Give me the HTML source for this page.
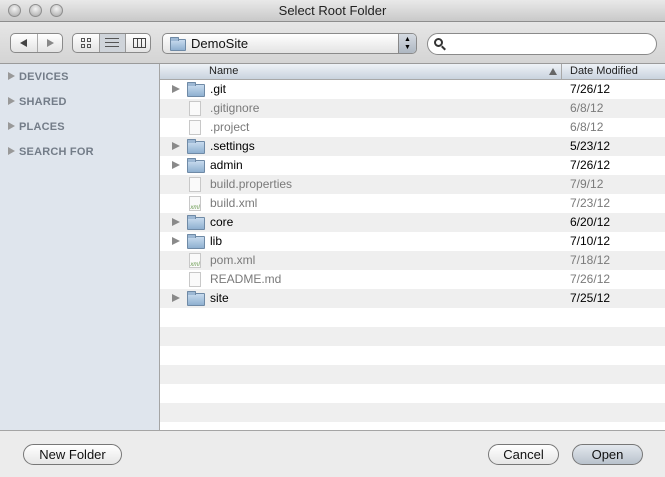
<!DOCTYPE html>
<html><head><style>
*{margin:0;padding:0;box-sizing:border-box}
body{width:665px;height:477px;overflow:hidden;font-family:"Liberation Sans",sans-serif;background:#ececec;position:relative}
.title{position:absolute;left:0;top:0;width:665px;height:22px;background:linear-gradient(#e9e9e9,#c9c9c9);border-bottom:1px solid #8d8d8d;text-align:center;font-size:13px;line-height:22px;color:#222}
.light{position:absolute;top:4px;width:13px;height:13px;border-radius:50%;background:radial-gradient(circle at 50% 35%,#f4f4f4,#bdbdbd 70%,#9a9a9a);border:1px solid #8e8e8e}
.tool{position:absolute;left:0;top:22px;width:665px;height:42px;background:linear-gradient(#e6e6e6,#d4d4d4);border-bottom:1px solid #9a9a9a}
.btn{position:absolute;border:1px solid #8a8a8a;border-radius:5px;background:linear-gradient(#fff,#e3e3e3)}
.side{position:absolute;left:0;top:64px;width:160px;height:366px;background:#dfe5ed;border-right:1px solid #a5a5a5}
.side div{position:absolute;left:8px;font-size:11px;font-weight:bold;color:#737c88;letter-spacing:.2px}
.side div:before{content:"";display:inline-block;border-left:7px solid #999;border-top:4px solid transparent;border-bottom:4px solid transparent;margin-right:4px;vertical-align:0}
.list{position:absolute;left:160px;top:64px;width:505px;height:366px;background:repeating-linear-gradient(#fff 0 19px,#efefef 19px 38px);background-position:0 16px}
.hdr{position:absolute;left:0;top:0;width:505px;height:16px;background:linear-gradient(#eef2f7,#c9d3de);border-bottom:1px solid #a8a8a8;font-size:11px;color:#222}
.row{position:absolute;left:0;width:505px;height:19px;font-size:12px;line-height:19px}
.row .n{position:absolute;left:50px}
.row .d{position:absolute;left:410px}
.g{color:#7a7a7a}
.tri{position:absolute;left:12px;top:5px;border-left:8px solid #8a8a8a;border-top:4.5px solid transparent;border-bottom:4.5px solid transparent}
.fold{position:absolute;left:27px;top:4px;width:18px;height:13px;border:1px solid #6f8aa6;border-radius:1px;background:linear-gradient(#c8dbee,#8fb0d0)}
.fold:before{content:"";position:absolute;left:-1px;top:-3px;width:7px;height:3px;background:#9db8d4;border:1px solid #6f8aa6;border-bottom:none;border-radius:1px 1px 0 0}
.doc{position:absolute;left:29px;top:2px;width:12px;height:15px;border:1px solid #c8c8c8;background:#fafafa;font-size:6px;color:#6a9a50;line-height:22px;text-align:center}
.bot{position:absolute;left:0;top:430px;width:665px;height:47px;background:#ececec;border-top:1px solid #a5a5a5}
.pb{position:absolute;top:13px;height:21px;border:1px solid #777;border-radius:11px;background:linear-gradient(#fff,#e6e6e6);font-size:13px;text-align:center;line-height:19px;color:#111}
.sq{position:absolute;width:4px;height:4px;border:1px solid #555}
</style></head><body>
<div class="title">Select Root Folder</div>
<div class="light" style="left:8px"></div><div class="light" style="left:29px"></div><div class="light" style="left:50px"></div>
<div class="tool">
<div class="btn" style="left:10px;top:11px;width:53px;height:20px"><span style="position:absolute;left:9px;top:5px;border-right:7px solid #444;border-top:4px solid transparent;border-bottom:4px solid transparent"></span><span style="position:absolute;left:26px;top:0;width:1px;height:18px;background:#aaa"></span><span style="position:absolute;left:36px;top:5px;border-left:7px solid #888;border-top:4px solid transparent;border-bottom:4px solid transparent"></span></div>
<div class="btn" style="left:72px;top:11px;width:79px;height:20px;overflow:hidden"><span style="position:absolute;left:26px;top:0;width:27px;height:18px;background:#cfd4da;border-left:1px solid #999;border-right:1px solid #999"></span><span class="sq" style="left:8px;top:4px"></span><span class="sq" style="left:14px;top:4px"></span><span class="sq" style="left:8px;top:10px"></span><span class="sq" style="left:14px;top:10px"></span><span style="position:absolute;left:32px;top:4px;width:14px;height:9px;border-top:1px solid #555;border-bottom:1px solid #555"></span><span style="position:absolute;left:32px;top:8px;width:14px;height:1px;background:#555"></span><span style="position:absolute;left:60px;top:4px;width:13px;height:10px;border:1px solid #444;background:linear-gradient(90deg,transparent 3px,#444 3px 4px,transparent 4px 7px,#444 7px 8px,transparent 8px)"></span></div>
<div class="btn" style="left:162px;top:11px;width:255px;height:21px"><span class="fold" style="left:7px;top:5px;width:16px;height:12px"></span><span style="position:absolute;left:28px;top:2px;font-size:13px;color:#111">DemoSite</span><span style="position:absolute;right:0;top:0;width:18px;height:19px;background:linear-gradient(#d5dbe2,#aeb7c2);border-left:1px solid #888;border-radius:0 4px 4px 0;font-size:7px;text-align:center;line-height:8px;padding-top:2px">▲<br>▼</span></div>
<div style="position:absolute;left:427px;top:11px;width:230px;height:22px;border:1px solid #8a8a8a;border-radius:11px;background:#fff"><span style="position:absolute;left:6px;top:4px;width:9px;height:9px;border:2px solid #333;border-radius:50%"></span><span style="position:absolute;left:13px;top:13px;width:5px;height:2px;background:#333;transform:rotate(45deg)"></span></div>
</div>
<div class="side">
<div style="top:7px">DEVICES</div><div style="top:32px">SHARED</div><div style="top:57px">PLACES</div><div style="top:82px">SEARCH FOR</div>
</div>
<div class="list">
<div class="hdr"><span style="position:absolute;left:49px;top:1px">Name</span><span style="position:absolute;left:389px;top:4px;border-bottom:7px solid #666;border-left:4px solid transparent;border-right:4px solid transparent"></span><span style="position:absolute;left:401px;top:0;width:1px;height:16px;background:#a8a8a8"></span><span style="position:absolute;left:410px;top:1px">Date Modified</span></div>
<div class="row" style="top:16px"><i class="tri"></i><i class="fold"></i><span class="n">.git</span><span class="d">7/26/12</span></div>
<div class="row g" style="top:35px"><i class="doc"></i><span class="n">.gitignore</span><span class="d">6/8/12</span></div>
<div class="row g" style="top:54px"><i class="doc"></i><span class="n">.project</span><span class="d">6/8/12</span></div>
<div class="row" style="top:73px"><i class="tri"></i><i class="fold"></i><span class="n">.settings</span><span class="d">5/23/12</span></div>
<div class="row" style="top:92px"><i class="tri"></i><i class="fold"></i><span class="n">admin</span><span class="d">7/26/12</span></div>
<div class="row g" style="top:111px"><i class="doc"></i><span class="n">build.properties</span><span class="d">7/9/12</span></div>
<div class="row g" style="top:130px"><i class="doc">xml</i><span class="n">build.xml</span><span class="d">7/23/12</span></div>
<div class="row" style="top:149px"><i class="tri"></i><i class="fold"></i><span class="n">core</span><span class="d">6/20/12</span></div>
<div class="row" style="top:168px"><i class="tri"></i><i class="fold"></i><span class="n">lib</span><span class="d">7/10/12</span></div>
<div class="row g" style="top:187px"><i class="doc">xml</i><span class="n">pom.xml</span><span class="d">7/18/12</span></div>
<div class="row g" style="top:206px"><i class="doc"></i><span class="n">README.md</span><span class="d">7/26/12</span></div>
<div class="row" style="top:225px"><i class="tri"></i><i class="fold"></i><span class="n">site</span><span class="d">7/25/12</span></div>
</div>
<div class="bot">
<div class="pb" style="left:23px;width:99px">New Folder</div>
<div class="pb" style="left:488px;width:71px">Cancel</div>
<div class="pb" style="left:572px;width:71px;background:linear-gradient(#e3e8ee,#b9c2cc)">Open</div>
</div>
</body></html>
